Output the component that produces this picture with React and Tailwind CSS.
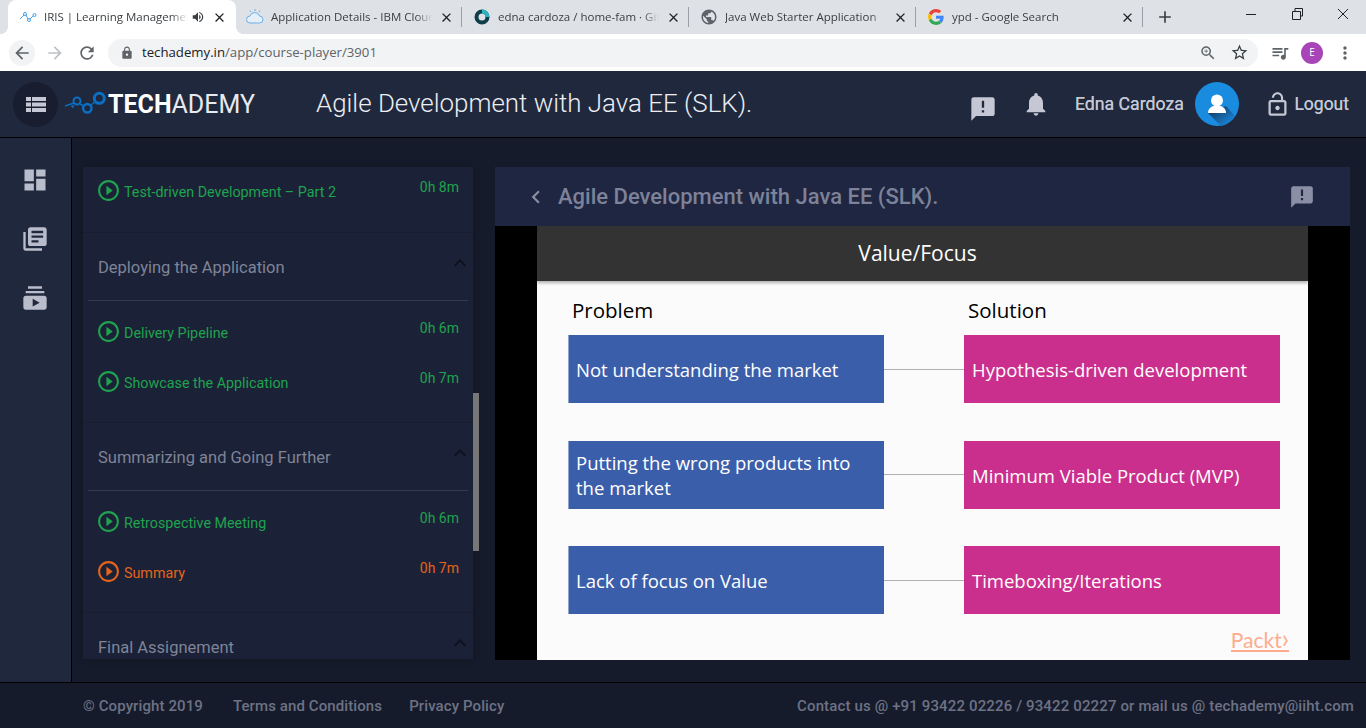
import React from 'react';
import {
  MdArrowBack, MdArrowForward, MdRefresh, MdLock, MdZoomIn, MdStarBorder, MdQueueMusic, MdMoreVert,
  MdClose, MdAdd, MdVolumeUp, MdPublic, MdDashboard, MdLibraryBooks, MdSubscriptions, MdAnnouncement,
  MdNotifications, MdPlayCircleOutline, MdKeyboardArrowUp, MdChevronLeft, MdLockOpen,
} from 'react-icons/md';

const IrisIcon = () => (
  <svg width="18" height="12" viewBox="0 0 18 12" fill="none" stroke="#4a9fe0" strokeWidth="1">
    <path d="M1 8 L5 4 M7 4 L9 8 M11 8 L14 5" />
    <circle cx="6" cy="3" r="1.5" />
    <circle cx="10" cy="9" r="1.5" />
    <circle cx="15.5" cy="4" r="1.5" />
  </svg>
);

const CloudIcon = () => (
  <svg width="18" height="18" viewBox="0 0 18 18" fill="none" stroke="#6ab0e8" strokeWidth="1">
    <path d="M4 15 a3.5 3.5 0 0 1 0 -7 a5 5 0 0 1 9.5 0 a3.5 3.5 0 0 1 0 7 Z" fill="#e6eef8" />
    <path d="M9 1 v2 M4 2.5 l1 1.5 M14 2.5 l-1 1.5" />
  </svg>
);

const RingIcon = () => (
  <svg width="16" height="16" viewBox="0 0 16 16" fill="none">
    <circle cx="8" cy="8" r="5.5" stroke="#0f3d4a" strokeWidth="4" />
    <path d="M8 2.5 a5.5 5.5 0 0 1 5.5 5.5" stroke="#2bb5c4" strokeWidth="4" />
  </svg>
);

const GoogleIcon = () => (
  <svg width="16" height="16" viewBox="0 0 48 48">
    <path fill="#EA4335" d="M24 9.5c3.5 0 6.6 1.2 9.1 3.6l6.8-6.8C35.8 2.5 30.4 0 24 0 14.6 0 6.5 5.4 2.6 13.2l7.9 6.2C12.4 13.7 17.7 9.5 24 9.5z" />
    <path fill="#4285F4" d="M46.9 24.5c0-1.6-.1-3.1-.4-4.5H24v9h12.9c-.6 3-2.2 5.5-4.8 7.2l7.7 6c4.5-4.2 7.1-10.3 7.1-17.7z" />
    <path fill="#FBBC05" d="M10.5 28.6c-.5-1.4-.8-3-.8-4.6s.3-3.2.8-4.6l-7.9-6.2C.9 16.5 0 20.1 0 24s.9 7.5 2.6 10.8l7.9-6.2z" />
    <path fill="#34A853" d="M24 48c6.5 0 11.9-2.1 15.9-5.8l-7.7-6c-2.2 1.4-4.9 2.3-8.2 2.3-6.3 0-11.6-4.2-13.5-9.9l-7.9 6.2C6.5 42.6 14.6 48 24 48z" />
  </svg>
);

const WindowControls = () => (
  <svg width="102" height="12" viewBox="0 0 102 12" fill="none" stroke="#202124" className="mb-[14px] mr-[18px]">
    <path d="M0 6.5 H10" />
    <path d="M46.5 3.5 H54.5 V11.5 H46.5 Z M49 3 V0.5 H56.5 V8 H54.5" />
    <path d="M92 1 L102 11 M102 1 L92 11" />
  </svg>
);

const tabs = [
  { title: 'Application Details - IBM Cloud', icon: <CloudIcon /> },
  { title: 'edna cardoza / home-fam · GitHub', icon: <RingIcon /> },
  { title: 'Java Web Starter Application', icon: <MdPublic size={18} className="text-[#5f6368]" /> },
  { title: 'ypd - Google Search', icon: <GoogleIcon /> },
];

const BrowserChrome = () => (
  <div className="h-[71px] shrink-0 bg-white font-['Open_Sans',sans-serif]">
    <div className="h-[34px] bg-[#dee1e6] flex items-end pl-2 text-[11.5px] text-[#3c4043]">
      <div className="relative w-[228px] h-[34px] bg-white rounded-t-lg flex items-center pl-[11px] pr-2 text-[#3c4043]">
        <div className="absolute -left-2 bottom-0 w-2 h-2 bg-[radial-gradient(circle_at_0_0,#dee1e6_8px,white_8px)]" />
        <div className="absolute -right-2 bottom-0 w-2 h-2 bg-[radial-gradient(circle_at_100%_0,#dee1e6_8px,white_8px)]" />
        <IrisIcon />
        <span className="ml-[7px] w-[144px] whitespace-nowrap overflow-hidden [mask-image:linear-gradient(to_right,black_88%,transparent)]">IRIS | Learning Management</span>
        <MdVolumeUp size={14} className="ml-[3px]" />
        <MdClose size={15} className="ml-[7px] text-[#202124]" />
      </div>
      {tabs.map((t) => (
        <div key={t.title} className="w-[227px] h-[34px] flex items-center">
          <div className="w-[226px] h-5 flex items-center pl-[10px] pr-[7px] gap-[7px] border-r border-[#9aa0a6]">
            <span className="w-[18px] flex justify-center">{t.icon}</span>
            <span className="flex-1 whitespace-nowrap overflow-hidden [mask-image:linear-gradient(to_right,black_90%,transparent)]">{t.title}</span>
            <MdClose size={15} className="text-[#202124]" />
          </div>
        </div>
      ))}
      <div className="h-[34px] flex items-center ml-[11px]">
        <MdAdd size={20} className="text-[#3c4043]" />
      </div>
      <div className="flex-1" />
      <WindowControls />
    </div>
    <div className="h-[37px] flex items-center pl-[9px] pr-[11px] text-[#5f6368]">
      <div className="w-[26px] h-[26px] rounded-full bg-[#f1f3f4] flex items-center justify-center">
        <MdArrowBack size={20} />
      </div>
      <MdArrowForward size={20} className="ml-[10px] text-[#bdc1c6]" />
      <MdRefresh size={20} className="ml-[12px]" />
      <div className="ml-[11px] h-7 w-[1150px] shrink-0 bg-[#f1f3f4] rounded-full flex items-center pl-3 pr-[9px]">
        <MdLock size={14} />
        <span className="ml-[8px] text-[13.2px] text-[#5f6368]"><span className="text-[#202124]">techademy.in</span>/app/course-player/3901</span>
        <span className="flex-1" />
        <MdZoomIn size={18} />
        <MdStarBorder size={19} className="ml-[13px] text-[#3c4043]" />
      </div>
      <MdQueueMusic size={20} className="ml-[12px]" />
      <div className="ml-[11px] w-[22px] h-[22px] rounded-full bg-[#a744b8] text-white text-[10px] flex items-center justify-center">E</div>
      <MdMoreVert size={20} className="ml-[12px]" />
    </div>
  </div>
);

const Logo = () => (
  <div className="flex items-center">
    <svg width="43" height="26" viewBox="0 0 43 26" fill="none" stroke="#0a6fc2">
      <path d="M0 15 L9 12 M15 13 L19 15 M26 14 L30 11" strokeWidth="1.5" />
      <path d="M6 15 l3 -1 l-1 3 z" fill="#0a6fc2" strokeWidth="0.5" />
      <circle cx="12" cy="10" r="3.5" strokeWidth="2" />
      <circle cx="22.3" cy="17.3" r="4.2" strokeWidth="2.5" />
      <circle cx="34.3" cy="7.3" r="5" strokeWidth="3" />
    </svg>
    <span className="text-[25px] leading-none text-white font-bold">TECH<span className="font-normal text-[#e8e9ee]">ADEMY</span></span>
  </div>
);

const UserAvatar = () => (
  <svg width="44" height="44" viewBox="0 0 44 44" className="ml-[11px] shrink-0">
    <defs>
      <linearGradient id="avatarShade" x1="0.2" y1="0.2" x2="0.9" y2="0.9">
        <stop offset="0" stopColor="#143f6b" />
        <stop offset="1" stopColor="#1a8ce0" />
      </linearGradient>
    </defs>
    <circle cx="22" cy="22" r="22" fill="#1a8ce0" />
    <path d="M13 31 L26 44 A22 22 0 0 0 40 34 L31 24 Z" fill="url(#avatarShade)" />
    <circle cx="22" cy="18.5" r="6" fill="#fff" />
    <path d="M13 31 C13 26 17 23.5 22 23.5 C27 23.5 31 26 31 31 Z" fill="#fff" />
  </svg>
);

const Header = () => (
  <header className="h-[67px] shrink-0 bg-[#20283d] border-b border-black flex items-center pl-[13px] pr-[17px]">
    <div className="w-[45px] h-[45px] rounded-full bg-[#181e30] flex items-center justify-center">
      <svg width="20" height="15" viewBox="0 0 20 15" fill="#c5c8d4">
        <rect x="0" y="0" width="5" height="4" /><rect x="6" y="0" width="14" height="4" />
        <rect x="0" y="5.5" width="5" height="4" /><rect x="6" y="5.5" width="14" height="4" />
        <rect x="0" y="11" width="5" height="4" /><rect x="6" y="11" width="14" height="4" />
      </svg>
    </div>
    <div className="ml-[7px]"><Logo /></div>
    <h1 className="ml-[61px] mb-[2px] text-[25.9px] font-light text-[#eceef2] whitespace-nowrap">Agile Development with Java EE (SLK).</h1>
    <div className="flex-1" />
    <MdAnnouncement size={28} className="text-[#c5c8d4] mt-[10px]" />
    <MdNotifications size={28} className="ml-[25px] text-[#c5c8d4]" />
    <span className="ml-[25px] text-[17.7px] text-[#c5c8d4] [text-shadow:0_0_0.4px_#c5c8d4]">Edna Cardoza</span>
    <UserAvatar />
    <MdLockOpen size={27} className="ml-[25.5px] text-[#c5c8d4]" />
    <span className="ml-[3px] text-[17.5px] text-[#c5c8d4] [text-shadow:0_0_0.4px_#c5c8d4]">Logout</span>
  </header>
);

const Sidebar = () => (
  <aside className="w-[72px] shrink-0 bg-[#20283d] border-r border-black flex flex-col items-center pt-[28px] gap-[31px] pr-[2px] text-[#b9bdcb]">
    <MdDashboard size={28} />
    <MdLibraryBooks size={28} />
    <MdSubscriptions size={28} />
  </aside>
);

const Lesson = ({ title, time, current }) => (
  <div className={`h-[49.5px] flex items-start pl-[13px] pr-[14px] pt-[1px] ${current ? 'text-[#e5641b]' : 'text-[#1fa34f]'}`}>
    <MdPlayCircleOutline size={25} className="shrink-0" />
    <span className="ml-[3px] mt-[4px] text-[14.3px] leading-5 flex-1">{title}</span>
    <span className="-mt-[1px] text-sm">{time}</span>
  </div>
);

const Section = ({ title, lessons }) => (
  <section className="bg-[#1b2136] mb-[1px] pb-[5px]">
    <div className="h-[68px] mx-[5px] border-b border-[#343a50] flex items-center justify-between pl-[10px]">
      <span className="mt-[3px] text-[16.5px] text-[#7f8498]">{title}</span>
      <MdKeyboardArrowUp size={24} className="text-[#0d1120] -mt-2 -mr-[4px]" />
    </div>
    <div className="pt-[17px]">
      {lessons.map((l) => <Lesson key={l.title} {...l} />)}
    </div>
  </section>
);

const CoursePanel = () => (
  <div className="w-[396px] shrink-0 h-[492px] flex">
    <div className="w-[390px] overflow-hidden bg-[#181d31] shadow-[0_0_6px_rgba(0,0,0,0.25)]">
      <div className="h-[65px] pt-[10px] mb-[1px] bg-[#1b2136]">
        <Lesson title="Test-driven Development – Part 2" time="0h 8m" />
      </div>
      <Section
        title="Deploying the Application"
        lessons={[
          { title: 'Delivery Pipeline', time: '0h 6m' },
          { title: 'Showcase the Application', time: '0h 7m' },
        ]}
      />
      <Section
        title="Summarizing and Going Further"
        lessons={[
          { title: 'Retrospective Meeting', time: '0h 6m' },
          { title: 'Summary', time: '0h 7m', current: true },
        ]}
      />
      <Section title="Final Assignement" lessons={[]} />
    </div>
    <div className="w-[6px] pt-[226px]">
      <div className="h-[158px] bg-[#777777]" />
    </div>
  </div>
);

const rows = [
  { problem: 'Not understanding the market', solution: 'Hypothesis-driven development' },
  { problem: 'Putting the wrong products into the market', solution: 'Minimum Viable Product (MVP)' },
  { problem: 'Lack of focus on Value', solution: 'Timeboxing/Iterations' },
];

const Slide = () => (
  <div className="w-[771px] h-full bg-[#fbfbfb] flex flex-col font-['Open_Sans',sans-serif] text-[18.5px] leading-[25px]">
    <div className="h-[55px] shrink-0 bg-[#333333] text-white text-[21px] flex items-center justify-center pr-[10px] shadow-[0_2px_3px_rgba(0,0,0,0.3)]">Value/Focus</div>
    <div className="pl-[31px] pr-[28px] pt-[16px] flex-1 flex flex-col">
      <div className="flex text-black text-[20.5px] h-[38px] pt-[1px]">
        <span className="w-[396px] pl-[4px]">Problem</span>
        <span className="pl-[4px]">Solution</span>
      </div>
      <div className="flex flex-col gap-[37.5px]">
        {rows.map((r) => (
          <div key={r.problem} className="flex items-center h-[68px]">
            <div className="w-[316px] shrink-0 h-full bg-[#3b5eab] border-l border-[#8ea2cf] text-white flex items-center pl-[7px] pr-2 pt-[1px]">{r.problem}</div>
            <div className="w-[80px] shrink-0 h-px bg-[#b0b0b0]" />
            <div className="w-[316px] shrink-0 h-full bg-[#cb2f8d] text-white flex items-center px-2 pt-[1px]">{r.solution}</div>
          </div>
        ))}
      </div>
      <div className="mt-auto mb-[8px] self-end -mr-[9px] font-['Lato',sans-serif] text-[#ffab8e] text-[21px] leading-[20px] border-b-2 border-[#ffab8e]">Packt<span className="text-[26px] leading-[18px]">›</span></div>
    </div>
  </div>
);

const Player = () => (
  <div className="w-[855px] shrink-0 h-[493px] flex flex-col">
    <div className="h-[59px] shrink-0 bg-[#1f2641] flex items-center pl-[28px] pr-[35px] text-[#8a8fa6]">
      <MdChevronLeft size={26} />
      <h2 className="ml-[9px] text-[22px] font-medium text-[#7d8299] flex-1">Agile Development with Java EE (SLK).</h2>
      <MdAnnouncement size={26} />
    </div>
    <div className="flex-1 bg-black flex justify-center min-h-0">
      <Slide />
    </div>
  </div>
);

const Footer = () => (
  <footer className="h-[46px] shrink-0 bg-[#161b2b] border-t border-black flex items-center pl-[83px] pr-[12px] pt-[1px] text-[15px] tracking-[0.1px] font-medium text-[#6d7285]">
    <span>© Copyright 2019</span>
    <span className="ml-[30px]">Terms and Conditions</span>
    <span className="ml-[27px]">Privacy Policy</span>
    <span className="ml-auto tracking-[0.14px]">Contact us @ +91 93422 02226 / 93422 02227 or mail us @ techademy@iiht.com</span>
  </footer>
);

export default function App() {
  return (
    <div className="h-[728px] w-[1366px] overflow-hidden flex flex-col bg-[#161b2b] font-['Roboto',sans-serif]">
      <BrowserChrome />
      <Header />
      <div className="flex-1 flex min-h-0">
        <Sidebar />
        <main className="flex-1 pl-[11px] pt-[29px] flex gap-[16px] min-w-0">
          <CoursePanel />
          <Player />
        </main>
      </div>
      <Footer />
    </div>
  );
}
